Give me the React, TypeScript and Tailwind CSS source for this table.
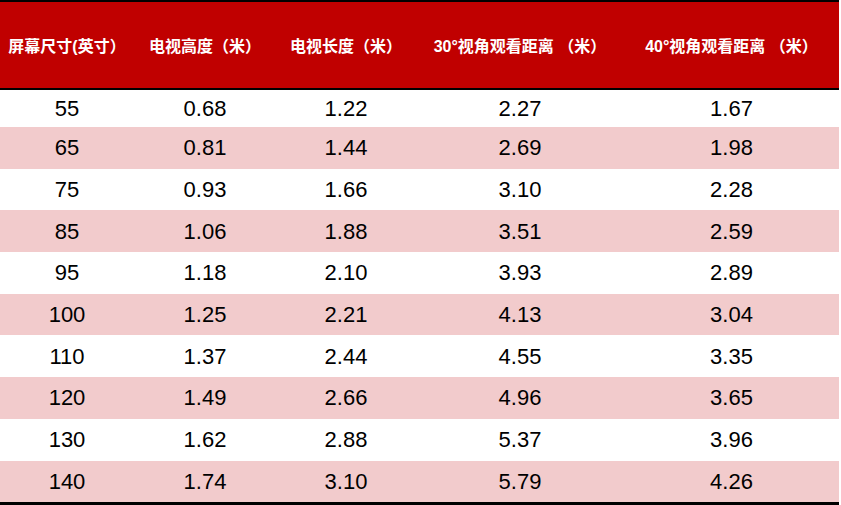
const headers = [
  "屏幕尺寸(英寸）",
  "电视高度（米）",
  "电视长度（米）",
  "30°视角观看距离 （米）",
  "40°视角观看距离 （米）",
];

const rows = [
  ["55", "0.68", "1.22", "2.27", "1.67"],
  ["65", "0.81", "1.44", "2.69", "1.98"],
  ["75", "0.93", "1.66", "3.10", "2.28"],
  ["85", "1.06", "1.88", "3.51", "2.59"],
  ["95", "1.18", "2.10", "3.93", "2.89"],
  ["100", "1.25", "2.21", "4.13", "3.04"],
  ["110", "1.37", "2.44", "4.55", "3.35"],
  ["120", "1.49", "2.66", "4.96", "3.65"],
  ["130", "1.62", "2.88", "5.37", "3.96"],
  ["140", "1.74", "3.10", "5.79", "4.26"],
];

const cols = ["w-[134px]", "w-[142px]", "w-[140px]", "w-[208px]", "w-[215px]"];

export default function App() {
  return (
    <div className="w-[841px] h-[505px] bg-white">
      <div className="w-[839px] border-t-2 border-b-[3px] border-black">
        <div className="flex h-[88px] pt-[3px] bg-[#c00000] border-b-2 border-black font-['Liberation_Sans','Noto_Sans_CJK_SC',sans-serif] text-[16px] font-bold text-white">
          {headers.map((h, i) => (
            <div key={i} className={`${cols[i]} flex items-center justify-center whitespace-nowrap`}>
              {h}
            </div>
          ))}
        </div>
        {rows.map((r, ri) => (
          <div
            key={ri}
            className={`flex ${ri === 0 ? "h-[37px]" : "h-[41.7px]"} ${
              ri % 2 === 1 ? "bg-[#f2cbcc]" : "bg-white"
            } font-['Liberation_Sans',sans-serif] text-[22px] text-black`}
          >
            {r.map((c, ci) => (
              <div key={ci} className={`${cols[ci]} flex items-center justify-center`}>
                {c}
              </div>
            ))}
          </div>
        ))}
      </div>
    </div>
  );
}
